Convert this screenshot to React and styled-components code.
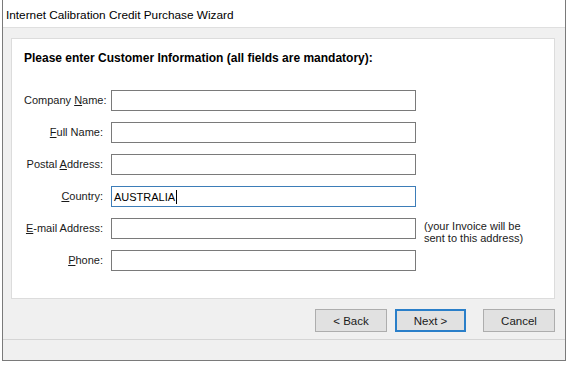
import React from "react";
import styled, { createGlobalStyle } from "styled-components";

const GlobalStyle = createGlobalStyle`
    html, body {
        margin: 0;
        padding: 0;
        background: #ffffff;
    }
    body {
        font-family: "Liberation Sans", Arial, sans-serif;
        font-size: 11px;
        color: #000000;
    }
`;

const fields = [
    { key: "company", pre: "Company ", u: "N", post: "ame:" },
    { key: "full", pre: "", u: "F", post: "ull Name:" },
    { key: "postal", pre: "Postal ", u: "A", post: "ddress:" },
    { key: "country", pre: "", u: "C", post: "ountry:", value: "AUSTRALIA", focused: true },
    { key: "email", pre: "", u: "E", post: "-mail Address:", hint: true },
    { key: "phone", pre: "", u: "P", post: "hone:" },
];

function App() {
    return (
        <>
            <GlobalStyle />
            <Window>
                <TitleBar>Internet Calibration Credit Purchase Wizard</TitleBar>
                <Body>
                    <Panel>
                        <Heading>Please enter Customer Information (all fields are mandatory):</Heading>
                        <Form>
                            {fields.map((f) => (
                                <React.Fragment key={f.key}>
                                    <Label>
                                        {f.pre}
                                        <u>{f.u}</u>
                                        {f.post}
                                    </Label>
                                    <Input $focused={f.focused}>
                                        {f.value}
                                        {f.focused && <Caret />}
                                    </Input>
                                    <Hint>
                                        {f.hint && (
                                            <>
                                                (your Invoice will be
                                                <br />
                                                sent to this address)
                                            </>
                                        )}
                                    </Hint>
                                </React.Fragment>
                            ))}
                        </Form>
                    </Panel>
                    <ButtonRow>
                        <Button>&lt; Back</Button>
                        <Button $primary>Next &gt;</Button>
                        <Button $cancel>Cancel</Button>
                    </ButtonRow>
                    <Footer />
                </Body>
            </Window>
        </>
    );
}

const Window = styled.div`
    width: 562px;
    height: 360px;
    margin-left: 2px;
    border: 1px solid #7a7a7a;
    border-top: none;
    display: flex;
    flex-direction: column;
    background: #f0f0f0;
`;

const TitleBar = styled.div`
    height: 28px;
    padding: 2px 0 0 3px;
    box-sizing: border-box;
    display: flex;
    align-items: center;
    background: #ffffff;
    border-bottom: 1px solid #dfdfdf;
    font-size: 11.8px;
    flex-shrink: 0;
`;

const Body = styled.div`
    flex: 1;
    display: flex;
    flex-direction: column;
`;

const Panel = styled.div`
    margin: 10px 10px 0 8px;
    background: #ffffff;
    border: 1px solid #dcdcdc;
    padding: 11px 0 0 12px;
    box-sizing: border-box;
    height: 261px;
`;

const Heading = styled.div`
    font-weight: bold;
    font-size: 12px;
    line-height: 16px;
`;

const Form = styled.div`
    margin-top: 24px;
    display: grid;
    grid-template-columns: 79px 305px auto;
    column-gap: 8px;
    row-gap: 12px;
    grid-auto-rows: 20px;
`;

const Label = styled.div`
    text-align: right;
    line-height: 21px;
    font-size: 11px;
    color: #1a1a1a;
    white-space: nowrap;
    u {
        text-underline-offset: 1px;
    }
`;

const Input = styled.div`
    box-sizing: border-box;
    height: 21px;
    border: 1px solid ${(p) => (p.$focused ? "#3d7db8" : "#7a7a7a")};
    background: #ffffff;
    display: flex;
    align-items: center;
    padding-left: 2px;
    font-size: 11px;
    color: #000000;
`;

const Caret = styled.span`
    display: inline-block;
    width: 1px;
    height: 14px;
    background: #000000;
    margin-left: 1px;
`;

const Hint = styled.div`
    font-size: 11px;
    line-height: 12px;
    color: #1a1a1a;
    white-space: nowrap;
    margin-top: 2px;
`;

const ButtonRow = styled.div`
    display: flex;
    justify-content: flex-end;
    padding: 10px 10px 0 0;
    height: 23px;
`;

const Button = styled.div`
    box-sizing: border-box;
    width: ${(p) => (p.$primary ? "71px" : "72px")};
    height: 23px;
    margin-left: ${(p) => (p.$cancel ? "17px" : "8px")};
    display: flex;
    align-items: center;
    justify-content: center;
    background: #e1e1e1;
    border: ${(p) => (p.$primary ? "2px solid #2a7fc9" : "1px solid #adadad")};
    font-size: 11.5px;
    color: #1a1a1a;
`;

const Footer = styled.div`
    margin-top: 7px;
    border-top: 1px solid #d5d5d5;
    flex: 1;
`;

export default App;
